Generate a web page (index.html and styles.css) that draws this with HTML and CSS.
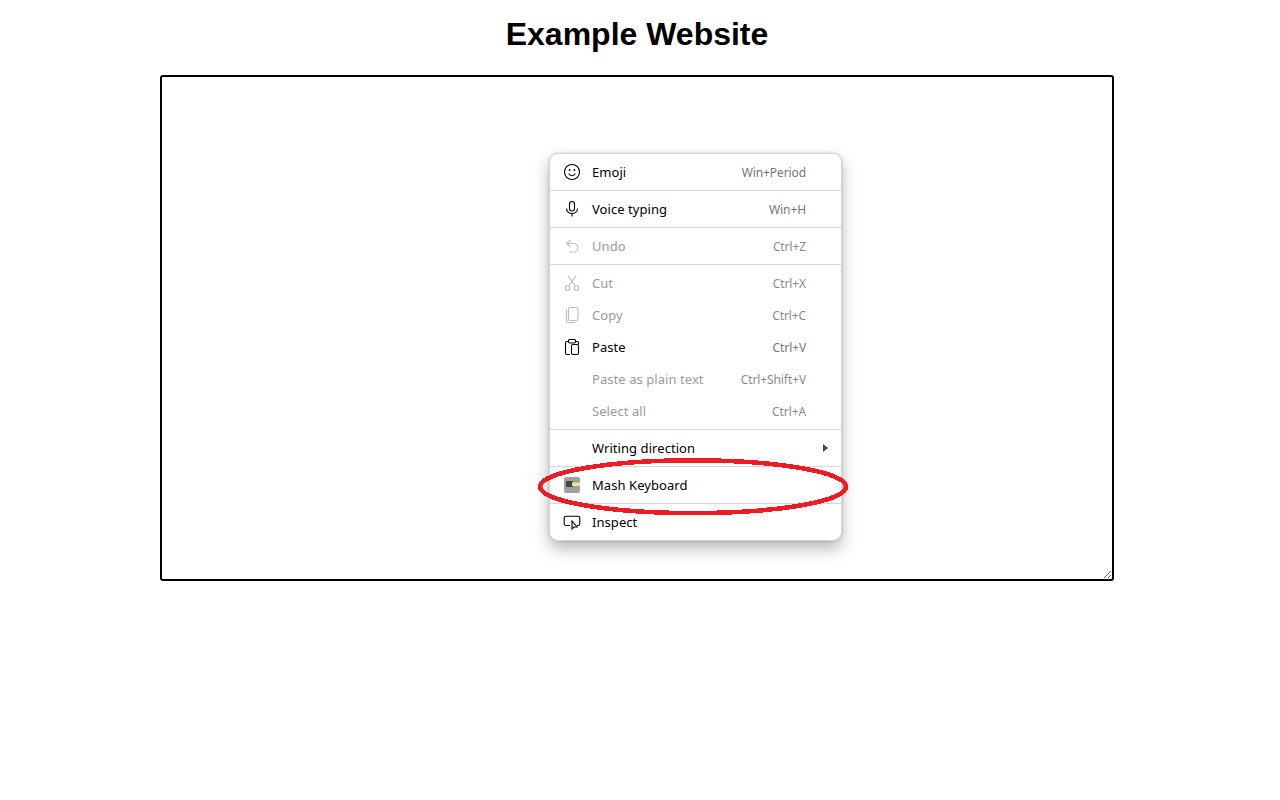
FILE: index.html
```html
<!DOCTYPE html>
<html lang="en">
<head>
<meta charset="utf-8">
<title>Example Website</title>
<link rel="stylesheet" href="styles.css">
</head>
<body>
<main class="page">
  <h1 class="title">Example Website</h1>
  <textarea class="editor"></textarea>
</main>
<div class="menu">
  <div class="row"><svg class="icon" viewBox="0 0 18 18"><circle cx="9" cy="9" r="7.5"/><path d="M5.6 10.6c.8 1.500 2 2.200 3.400 2.200s2.600-.7 3.400-2.200"/><circle class="dot" cx="6.600" cy="7" r=".9"/><circle class="dot" cx="11.400" cy="7" r=".9"/></svg><span class="label">Emoji</span><span class="key">Win+Period</span></div>
  <div class="sep"></div>
  <div class="row"><svg class="icon" viewBox="0 0 18 18"><rect x="6.500" y="1.500" width="5" height="9.500" rx="2.500"/><path d="M3.500 8.500c0 3 2.500 5 5.500 5s5.500-2 5.500-5M9 13.500v3"/></svg><span class="label">Voice typing</span><span class="key">Win+H</span></div>
  <div class="sep"></div>
  <div class="row off"><svg class="icon" viewBox="0 0 18 18"><path d="M7.500 3 3.500 6.500 7.500 10M3.500 6.500h7c2.500 0 4.500 1.800 4.500 4.200s-2 4.300-4.500 4.300H6"/></svg><span class="label">Undo</span><span class="key">Ctrl+Z</span></div>
  <div class="sep"></div>
  <div class="row off"><svg class="icon" viewBox="0 0 18 18"><circle cx="4.500" cy="14" r="2.300"/><circle cx="13.500" cy="14" r="2.300"/><path d="M5.800 12 13 1.500M12.200 12 5 1.500"/></svg><span class="label">Cut</span><span class="key">Ctrl+X</span></div>
  <div class="row off"><svg class="icon" viewBox="0 0 18 18"><rect x="5.500" y="1.500" width="9.500" height="13" rx="2"/><path d="M3.500 3.500v11c0 1.200.8 2 2 2h7"/></svg><span class="label">Copy</span><span class="key">Ctrl+C</span></div>
  <div class="row"><svg class="icon" viewBox="0 0 18 18"><path d="M5.500 3.500h-1.500a1.500 1.500 0 0 0-1.500 1.500v10a1.500 1.500 0 0 0 1.500 1.500h3M12.500 3.500h1.500a1.500 1.500 0 0 1 1.500 1.500v1.500"/><rect x="5.500" y="1.500" width="7" height="3.500" rx="1.200"/><rect x="8.500" y="6.500" width="7" height="10" rx="1.500"/></svg><span class="label">Paste</span><span class="key">Ctrl+V</span></div>
  <div class="row off"><span class="blank"></span><span class="label">Paste as plain text</span><span class="key">Ctrl+Shift+V</span></div>
  <div class="row off"><span class="blank"></span><span class="label">Select all</span><span class="key">Ctrl+A</span></div>
  <div class="sep"></div>
  <div class="row"><span class="blank"></span><span class="label">Writing direction</span><span class="arrow"></span></div>
  <div class="sep"></div>
  <div class="row"><svg class="icon" viewBox="0 0 18 18"><rect class="ext-bg" x="1" y="1" width="16" height="16" rx="2"/><rect class="ext-dark" x="3" y="5" width="7" height="6"/><path class="ext-light" d="M9 6.500h8V10H9z"/></svg><span class="label">Mash Keyboard</span></div>
  <div class="sep"></div>
  <div class="row"><svg class="icon" viewBox="0 0 18 18"><path d="M7 12.500H3a1.800 1.800 0 0 1-1.800-1.800V5a1.800 1.800 0 0 1 1.800-1.800h12A1.800 1.800 0 0 1 16.800 5v5.700a1.800 1.800 0 0 1-1.800 1.800h-1"/><path d="M9 8v8l2-2h3z"/></svg><span class="label">Inspect</span></div>
</div>
<svg class="ring" viewBox="0 0 320 70" width="320" height="70"><ellipse cx="155" cy="33.700" rx="153" ry="26.400"/></svg>
</body>
</html>
```

FILE: styles.css
```css
html, body {
  margin: 0;
  padding: 0;
  background: #fff;
}
body {
  font-family: "Liberation Sans", Arial, sans-serif;
}
.page {
  width: 1274px;
  display: flex;
  flex-direction: column;
  align-items: center;
}
.title {
  margin: 15px 0 21px;
  font-size: 32px;
  line-height: 39px;
  font-weight: 700;
  color: #000;
}
.editor {
  display: block;
  box-sizing: border-box;
  width: 954px;
  height: 506px;
  border: 2px solid #000;
  border-radius: 3px;
  padding: 0;
  background: #fff;
  outline: none;
}
.menu {
  position: absolute;
  left: 549px;
  top: 153px;
  box-sizing: border-box;
  width: 293px;
  height: 388px;
  padding: 2px 0;
  background: #fff;
  border: 1px solid #d4d4d4;
  border-radius: 9px;
  box-shadow: 0 8px 16px rgba(0, 0, 0, .28), 0 0 3px rgba(0, 0, 0, .18);
  font-family: "Noto Sans", "Open Sans", sans-serif;
  font-size: 13px;
  color: #000;
}
.row {
  display: flex;
  align-items: center;
  height: 32px;
  padding: 0 35px 0 13px;
}
.off {
  color: #9a9a9a;
}
.sep {
  height: 1px;
  margin: 2px 0;
  background: #d6d6d6;
}
.icon {
  flex: none;
  width: 18px;
  height: 18px;
  margin-right: 11px;
  fill: none;
  stroke: #000;
  stroke-width: 1.1;
}
.off .icon {
  stroke: #bdbdbd;
}
.blank {
  flex: none;
  width: 18px;
  margin-right: 11px;
}
.dot {
  fill: #000;
  stroke: none;
}
.ext-bg {
  fill: #a0a0a0;
  stroke: none;
}
.ext-dark {
  fill: #444;
  stroke: none;
}
.ext-light {
  fill: #f3e48f;
  stroke: none;
}
.label {
  flex: 1;
  white-space: nowrap;
  letter-spacing: .06px;
}
.key {
  font-size: 12px;
  letter-spacing: -.1px;
  color: #767676;
  white-space: nowrap;
}
.off .key {
  color: #8a8a8a;
}
.arrow {
  width: 0;
  height: 0;
  margin-right: -22px;
  border-left: 5px solid #444;
  border-top: 4px solid transparent;
  border-bottom: 4px solid transparent;
}
.ring {
  position: absolute;
  left: 538px;
  top: 453px;
  fill: none;
  stroke: #ed1c24;
  stroke-width: 4.5;
  shape-rendering: crispEdges;
}
```
